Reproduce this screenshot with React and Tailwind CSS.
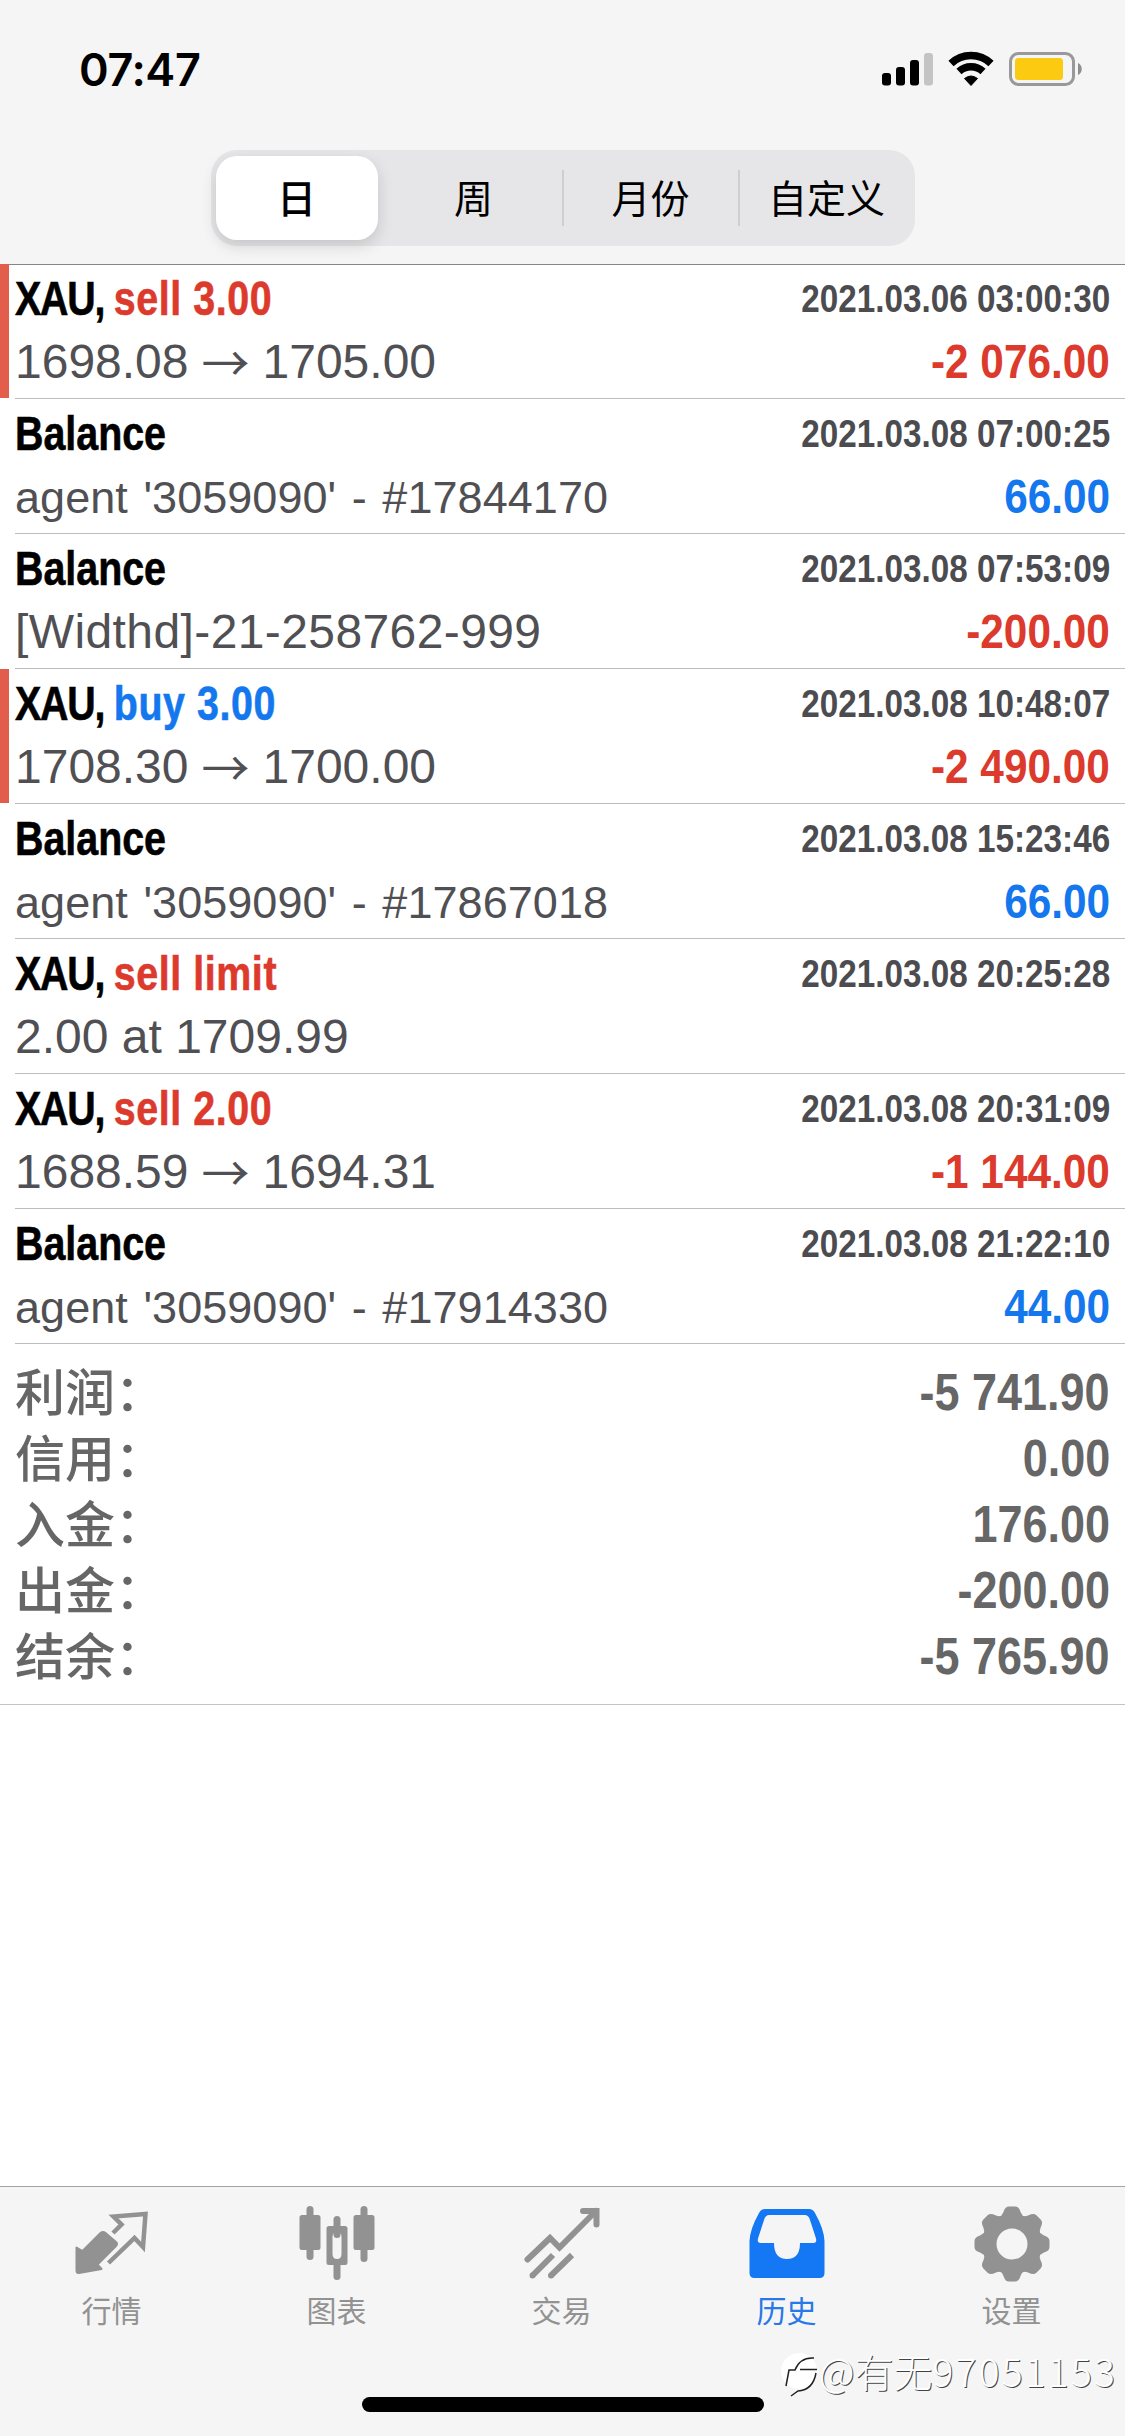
const periods = ['日', '周', '月份', '自定义'];

const deals = [
  { symbol: 'XAU', side: 'sell', label: 'sell 3.00', detail: ['1698.08', '1705.00'], time: '2021.03.06 03:00:30', amount: '-2 076.00', marked: true },
  { label: 'Balance', detail: "agent '3059090' - #17844170", size: 'text-[45px] tracking-[0.05px] [word-spacing:3px]', time: '2021.03.08 07:00:25', amount: '66.00' },
  { label: 'Balance', detail: '[Widthd]-21-258762-999', size: 'text-[48px] tracking-[0.4px]', time: '2021.03.08 07:53:09', amount: '-200.00' },
  { symbol: 'XAU', side: 'buy', label: 'buy 3.00', detail: ['1708.30', '1700.00'], time: '2021.03.08 10:48:07', amount: '-2 490.00', marked: true },
  { label: 'Balance', detail: "agent '3059090' - #17867018", size: 'text-[45px] tracking-[0.05px] [word-spacing:3px]', time: '2021.03.08 15:23:46', amount: '66.00' },
  { symbol: 'XAU', side: 'sell', label: 'sell limit', detail: '2.00 at 1709.99', size: 'text-[48px]', time: '2021.03.08 20:25:28' },
  { symbol: 'XAU', side: 'sell', label: 'sell 2.00', detail: ['1688.59', '1694.31'], time: '2021.03.08 20:31:09', amount: '-1 144.00' },
  { label: 'Balance', detail: "agent '3059090' - #17914330", size: 'text-[45px] tracking-[0.05px] [word-spacing:3px]', time: '2021.03.08 21:22:10', amount: '44.00' },
];

const totals = [
  ['利润', '-5 741.90'],
  ['信用', '0.00'],
  ['入金', '176.00'],
  ['出金', '-200.00'],
  ['结余', '-5 765.90'],
];

function StatusBar() {
  return (
    <div className="flex h-[138px] items-center justify-between pl-[79px] pr-[42px]">
      <span className="font-['Inter','Liberation_Sans',sans-serif] text-[45px] font-semibold leading-none tracking-[-0.4px]">07:47</span>
      <svg width="203" height="36" viewBox="0 0 203 36" aria-hidden="true">
        <rect x="2" y="22" width="9" height="12.5" rx="3" />
        <rect x="16" y="16" width="9" height="18.5" rx="3" />
        <rect x="30" y="9" width="9" height="25.500" rx="3" />
        <rect x="44" y="2" width="9" height="32.500" rx="3" fill="#c4c4c4" />
        <g fill="none" stroke="#000" strokeWidth="7.500">
          <path d="M71 12.500a29 29 0 0 1 40 0" />
          <path d="M79 20.500a17.500 17.500 0 0 1 24 0" />
        </g>
        <path d="M84.500 27.500q6.500-5 13 0L91 34.500Z" stroke="#000" strokeLinejoin="round" />
        <rect x="130.500" y="2.500" width="63" height="31" rx="8" fill="none" stroke="#999" strokeWidth="3" />
        <rect x="135" y="7" width="48" height="22" rx="3.500" fill="#fdca12" />
        <path d="M198 12c5 2 5 10 0 12Z" fill="#8e8e8e" />
      </svg>
    </div>
  );
}

function PeriodSwitch() {
  return (
    <div className="mx-auto mt-3 grid h-24 w-[704px] grid-cols-4 rounded-[26px] bg-[#e6e6e8] font-['Noto_Sans_CJK_SC',sans-serif] text-[39px] leading-none">
      {periods.map((period, index) => (
        <button key={period} type="button" className={`flex items-center ${index === 0 ? 'pl-[5px]' : ''}`}>
          <span
            className={
              index === 0
                ? 'flex h-[84px] w-[162px] items-center justify-center rounded-[21px] bg-white pb-[3px] font-medium shadow-[0_6px_16px_rgba(0,0,0,0.14)]'
                : `-ml-px flex h-14 w-full items-center justify-center pb-[3px] ${index > 1 ? 'border-l-2 border-[#cfcfd2]' : ''}`
            }
          >
            {period}
          </span>
        </button>
      ))}
    </div>
  );
}

function Detail({ deal }) {
  if (!Array.isArray(deal.detail)) {
    return <span className={`whitespace-pre leading-none ${deal.size}`}>{deal.detail}</span>;
  }
  const [open, close] = deal.detail;
  return (
    <span className="flex items-center text-[48px] leading-none">
      <span>{open}</span>
      <span className="mx-[13px] pb-[5px] font-['Noto_Sans_CJK_SC',sans-serif]">→</span>
      <span>{close}</span>
    </span>
  );
}

function DealRow({ deal }) {
  const amountColor = deal.amount?.startsWith('-') ? 'text-[#dc3a2c]' : 'text-[#1477ee]';
  const labelColor = deal.side === 'sell' ? 'text-[#dc3a2c]' : 'text-[#1477ee]';
  return (
    <li className="flex h-[135px]">
      <span className={`mb-px w-[9px] ${deal.marked ? 'bg-[#e35d4c]' : ''}`} />
      <div className="ml-1.5 flex flex-1 flex-col border-b border-[#bdbdbf] pr-[15px]">
        <div className="flex h-[68px] items-center justify-between pt-px font-bold">
          <span className="origin-left scale-x-[0.82] whitespace-pre text-[48px] leading-none [-webkit-text-stroke:0.6px]">
            {deal.symbol && <span className="tracking-[-1.5px]">{`${deal.symbol}, `}</span>}
            <span className={deal.side ? `tracking-[0.7px] ${labelColor}` : ''}>{deal.label}</span>
          </span>
          <span className="origin-right scale-x-[0.853] text-[39px] leading-none text-[#4c4c50]">{deal.time}</span>
        </div>
        <div className="flex h-[60px] items-center justify-between text-[#505054]">
          <Detail deal={deal} />
          <span className={`origin-right scale-x-[0.882] text-[48px] font-bold leading-none ${amountColor}`}>{deal.amount}</span>
        </div>
      </div>
    </li>
  );
}

function Totals() {
  return (
    <dl className="border-b border-[#c4c4c6] px-[15px] pb-[17px] pt-[13px] text-[#666]">
      {totals.map(([name, value]) => (
        <div key={name} className="flex h-[66px] items-center justify-between leading-none">
          <dt className="pt-2 font-['Liberation_Sans','Noto_Sans_CJK_SC',sans-serif] text-[50px] font-medium">{`${name}：`}</dt>
          <dd className="origin-right scale-x-[0.882] pt-1 text-[51px] font-bold">{value}</dd>
        </div>
      ))}
    </dl>
  );
}

function QuotesIcon() {
  return (
    <svg width="76" height="80" viewBox="0 0 76 80" aria-hidden="true">
      <path d="M2.500 41.500 8.500 45 26.500 27Q29 25 31.500 27L42 36Q44 38 42 40L23.500 58.500 27.500 63 5 67Q2.500 67.500 2.500 64.500Z" fill="#929292" stroke="#929292" strokeWidth="2" strokeLinejoin="round" />
      <path d="M39 27 47.500 18.500 39.500 10.500 71.500 8 69 41 60.500 32 34.500 57" fill="none" stroke="#929292" strokeWidth="4.500" />
    </svg>
  );
}

function ChartIcon() {
  return (
    <svg width="76" height="80" viewBox="0 0 76 80" fill="#929292" aria-hidden="true">
      <rect x="7.500" y="0" width="7" height="54" rx="3.500" />
      <rect x="0.500" y="9" width="21" height="35" rx="2.500" />
      <rect x="34.500" y="10" width="7" height="22" rx="3.500" />
      <rect x="34.500" y="54" width="7" height="20" rx="3.500" />
      <path fillRule="evenodd" d="M30 20h16q2.500 0 2.500 2.500v34q0 2.500-2.500 2.500H30q-2.500 0-2.500-2.500v-34Q27.500 20 30 20Zm8 6q-4.500 0-4.500 5v17q0 5 4.500 5t4.500-5V31q0-5-4.500-5Z" />
      <rect x="61.500" y="0" width="7" height="56" rx="3.500" />
      <rect x="54.500" y="9" width="21" height="35" rx="2.500" />
    </svg>
  );
}

function TradeIcon() {
  return (
    <svg width="76" height="80" viewBox="0 0 76 80" fill="none" stroke="#929292" strokeWidth="6" aria-hidden="true">
      <path d="M3.500 53.500 26 32l9.500 9.500L72 5" strokeLinecap="round" />
      <path d="M59 5h13.500v13.500" strokeLinecap="round" />
      <path d="M8.500 69.500 29 49M27 69.500 48 49" />
      <path d="M8.500 69.500h.01M27 69.500h.01" strokeLinecap="round" />
    </svg>
  );
}

function HistoryIcon() {
  return (
    <svg width="76" height="80" viewBox="0 0 76 80" fill="#1478f5" aria-hidden="true">
      <path
        fillRule="evenodd"
        d="M16 3H60Q64 3 66 7Q75 23 75.500 35V67Q75.500 72 70.500 72H5.500Q.500 72 .500 67V35Q1 23 10 7Q12 3 16 3ZM20 9Q17 9 15.500 12.500L9 32.500Q8 37 11.500 37H25Q25 53 38 53T51 37H64.500Q68 37 67 32.500L60.500 12.500Q59 9 56 9Z"
      />
    </svg>
  );
}

function SettingsIcon() {
  return (
    <svg width="76" height="80" viewBox="-38 -38 76 80" fill="#929292" aria-hidden="true">
      {[0, 45, 90, 135, 180, 225, 270, 315].map((angle) => (
        <path key={angle} transform={`rotate(${angle})`} d="M-14-26Q-10-28-8.500-32Q-7-37.500-3-37.500H3Q7-37.500 8.500-32Q10-28 14-26L8-14H-8Z" />
      ))}
      <circle r="23" fill="none" stroke="#929292" strokeWidth="14" />
      <circle r="15.500" fill="#f5f5f5" />
    </svg>
  );
}

const tabs = [
  { name: '行情', Icon: QuotesIcon },
  { name: '图表', Icon: ChartIcon },
  { name: '交易', Icon: TradeIcon },
  { name: '历史', Icon: HistoryIcon, active: true },
  { name: '设置', Icon: SettingsIcon },
];

function TabBar() {
  return (
    <nav className="grid h-[250px] grid-cols-5 border-t border-[#a3a3a3] bg-[#f5f5f5] pt-[19px]">
      {tabs.map(({ name, Icon, active }) => (
        <button
          key={name}
          type="button"
          className={`flex flex-col items-center gap-2 pr-0.5 font-['Noto_Sans_CJK_SC',sans-serif] text-[30px] leading-none ${active ? 'text-[#2878e8]' : 'text-[#929292]'}`}
        >
          <Icon />
          <span>{name}</span>
        </button>
      ))}
    </nav>
  );
}

function Watermark() {
  return (
    <div className="absolute left-[781px] top-[2349px] flex items-center">
      <svg width="38" height="48" viewBox="0 0 38 48" fill="none" aria-hidden="true">
        <circle cx="18" cy="22" r="18" fill="#fff" />
        <path d="M5 37 8 21h6Q19 8 33 9M19 20.500h17M35 24Q32 41 17 42l-7 5" stroke="#222" strokeWidth="1.500" />
      </svg>
      <span className="-mt-1.5 flex whitespace-nowrap font-['Noto_Sans_CJK_SC',sans-serif] text-[39px] font-light leading-none text-white [text-shadow:1px_1px_0_#444]">
        <span>@有无</span>
        <span className="tracking-[2.2px]">97051153</span>
      </span>
    </div>
  );
}

export default function App() {
  return (
    <div className="relative flex h-[2436px] w-[1125px] flex-col overflow-hidden bg-white font-['Liberation_Sans','Noto_Sans_CJK_SC',sans-serif] text-black">
      <header className="-mb-px h-[265px] shrink-0 border-b border-[#858585] bg-[#f5f5f5]">
        <StatusBar />
        <PeriodSwitch />
      </header>
      <main className="flex-1">
        <ul>
          {deals.map((deal) => (
            <DealRow key={deal.time} deal={deal} />
          ))}
        </ul>
        <Totals />
      </main>
      <TabBar />
      <div className="absolute bottom-6 left-[362px] h-[15px] w-[402px] rounded-full bg-black" />
      <Watermark />
    </div>
  );
}
